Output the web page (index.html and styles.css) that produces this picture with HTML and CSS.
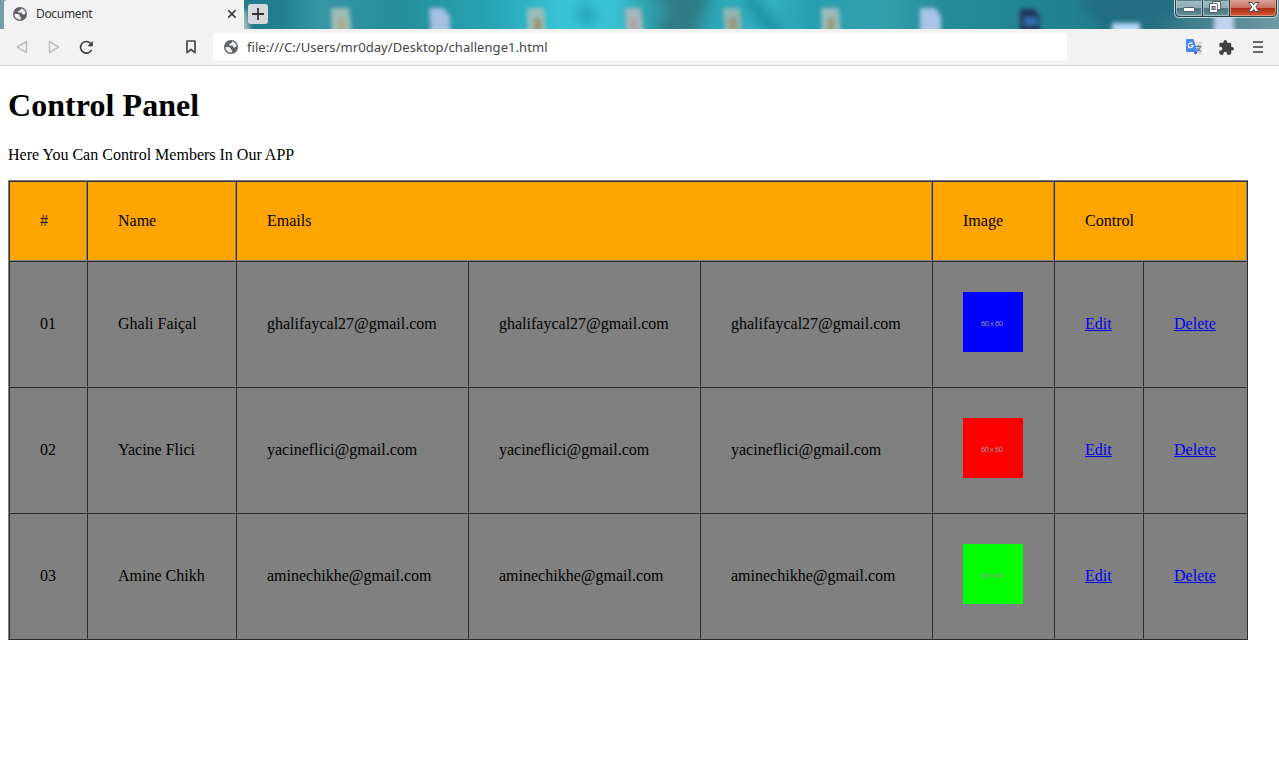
FILE: index.html
```
<!DOCTYPE html>
<html lang="en">
<head>
<meta charset="utf-8">
<title>Document</title>
<link rel="stylesheet" href="styles.css">
</head>
<body>
<svg class="defs" width="0" height="0">
  <symbol id="globe" viewBox="0 0 14 14">
    <circle cx="7" cy="7" r="7" fill="#5f6368"/>
    <path d="M8.2 1.5 7.4 3.3 5.5 3.7 5.1 5.3 6.6 5.7 8.8 5.6 9.2 7.3 11 7.6 12.6 6.3C12.4 4.2 11.4 2.3 8.2 1.5ZM1.5 7 4.7 7 6.6 8.1 6.7 9.5 8.3 10.2 7.7 12.5C4.2 12.9 1.4 10.4 1.5 7Z" fill="#f2f2f2"/>
  </symbol>
</svg>
<header class="browser">
  <div class="tabstrip">
    <svg class="wallpaper" width="1279" height="29" viewBox="0 0 1279 29">
      <defs>
        <linearGradient id="sea">
          <stop offset="0" stop-color="#719fac"/><stop offset=".19" stop-color="#207b8c"/>
          <stop offset=".22" stop-color="#237f8e"/><stop offset=".25" stop-color="#3596a4"/>
          <stop offset=".31" stop-color="#258d9b"/><stop offset=".38" stop-color="#27a2b1"/>
          <stop offset=".44" stop-color="#38c5d7"/><stop offset=".48" stop-color="#38c2d3"/>
          <stop offset=".51" stop-color="#2e9eaa"/><stop offset=".53" stop-color="#358690"/>
          <stop offset=".56" stop-color="#2ba6b7"/><stop offset=".6" stop-color="#36b3c3"/>
          <stop offset=".635" stop-color="#269eaf"/><stop offset=".69" stop-color="#34a0ae"/>
          <stop offset=".74" stop-color="#248b99"/><stop offset=".84" stop-color="#22808f"/>
          <stop offset=".9" stop-color="#267182"/><stop offset="1" stop-color="#7299a5"/>
        </linearGradient>
        <filter id="soft" filterUnits="userSpaceOnUse" x="0" y="-20" width="1279" height="80" color-interpolation-filters="sRGB"><feGaussianBlur stdDeviation="2.3"/></filter>
        <filter id="haze" filterUnits="userSpaceOnUse" x="0" y="-40" width="1279" height="120" color-interpolation-filters="sRGB"><feGaussianBlur stdDeviation="6"/></filter>
      </defs>
      <rect width="1279" height="29" fill="url(#sea)"/>
      <g filter="url(#haze)">
        <path d="M650 -8H712L690 40H652L672 10Z" fill="#2f7c86"/>
        <path d="M740 -5H755L790 35H765Z" fill="#1f94a5"/>
        <path d="M1075 -5H1180V12L1110 38Z" fill="#216f80"/>
        <path d="M575 8 590 5 598 22 582 25Z" fill="#24a5b5"/>
      </g>
      <g filter="url(#soft)">
        <path d="M240 10h6l5 26h-11z" fill="#9dbcb0"/>
        <path d="M331 8h18l3 28h-20z" fill="#9fbdb8"/><path d="M338 18h7v18h-7z" fill="#ada98b"/>
        <path d="M429 8h14l7 8v20h-19z" fill="#a4bfe0"/>
        <path d="M527 8h17l2 28h-18z" fill="#9cbebb"/><path d="M534 18h7v18h-7z" fill="#989270"/>
        <path d="M625 8h16l3 28h-18z" fill="#a4b6bc"/><path d="M631 17h6v19h-6z" fill="#b2a3a5"/>
        <path d="M723 8h17l2 28h-17z" fill="#91b6b0"/><path d="M729 18h8v18h-8z" fill="#9b987c"/>
        <path d="M821 8h18l2 28h-19z" fill="#9bbbb9"/><path d="M828 18h6v18h-6z" fill="#989571"/>
        <path d="M920 8h15l6 8v20h-21z" fill="#a9c4e7"/>
        <path d="M1020 9h14l6 7v20h-20z" fill="#223758"/><path d="M1024 17h14v9h-14z" fill="#326dae"/>
        <path d="M1112 23h28v13h-28z" fill="#b8d7f5"/>
        <path d="M1214 3h20v33h-20z" fill="#bcd2ec"/>
      </g>
    </svg>
    <div class="tab">
      <svg class="globe" width="14" height="14"><use href="#globe"/></svg>
      <span class="tab-title">Document</span>
      <svg class="tab-close" width="10" height="10" viewBox="0 0 10 10"><path d="M1.2 1.2 8.6 8.6M8.6 1.2 1.2 8.6" stroke="#333" stroke-width="1.5"/></svg>
    </div>
    <div class="new-tab"><svg width="12" height="12" viewBox="0 0 12 12"><path d="M6 0V12M0 6H12" stroke="#333" stroke-width="1.8"/></svg></div>
    <svg class="window-buttons" width="105" height="19" viewBox="0 0 105 19">
      <defs>
        <linearGradient id="glass" x2="0" y2="1"><stop offset="0" stop-color="#a1bdc5"/><stop offset=".48" stop-color="#8dabb4"/><stop offset=".52" stop-color="#49747f"/><stop offset="1" stop-color="#66939c"/></linearGradient>
        <linearGradient id="red" x2="0" y2="1"><stop offset="0" stop-color="#dca398"/><stop offset=".48" stop-color="#c6705e"/><stop offset=".52" stop-color="#ad2a13"/><stop offset="1" stop-color="#cf5c36"/></linearGradient>
      </defs>
      <path d="M.5 0V13Q.5 17.500 5 17.500H99Q103.500 17.500 103.500 13V0" fill="none" stroke="#c3dadd" stroke-width="1"/>
      <path d="M1.500 0V12Q1.500 16.500 6 16.500H98Q102.500 16.500 102.500 12V0Z" fill="url(#glass)" stroke="#24414b"/>
      <path d="M56 0H102V12Q102 16 98 16H56Z" fill="url(#red)"/>
      <path d="M2.500 0V12Q2.500 15.500 6 15.500H27.500V0M29.500 0V15.500H54.500V0" fill="none" stroke="#b9cfd4" opacity=".75"/>
      <path d="M56.500 0V15.500H98Q101.500 15.500 101.500 12V0" fill="none" stroke="#e2a58d" opacity=".75"/>
      <path d="M28.500 0V16M55.500 0V16" stroke="#243c45"/>
      <rect x="9.500" y="7.500" width="11" height="4" rx="1" fill="#fff" stroke="#555968"/>
      <path d="M38.500 1.500H46.500V9.500H43.500V12.500H35.500V3.500H38.500Z" fill="#fff" stroke="#555968"/>
      <path d="M38.500 3.500H43.500V9.500" fill="none" stroke="#777b88"/>
      <rect x="38" y="6.500" width="3" height="3" fill="#a8b8bf" stroke="#555968"/>
      <path d="M74.500 2.500H78L79.700 4.700 81.500 2.500H85L81.800 7 85 11.500H81.300L79.700 9.300 78 11.500H74.500L77.700 7Z" fill="#fff" stroke="#56495a"/>
    </svg>
  </div>
  <div class="toolbar">
    <svg class="back" width="12" height="14" viewBox="0 0 12 14"><path d="M10.500 1.500V12.500L1.300 7Z" fill="none" stroke="#bdbdbd" stroke-width="1.500" stroke-linejoin="round"/></svg>
    <svg class="forward" width="12" height="14" viewBox="0 0 12 14"><path d="M1.500 1.500V12.500L10.700 7Z" fill="none" stroke="#bdbdbd" stroke-width="1.500" stroke-linejoin="round"/></svg>
    <svg class="reload" width="15" height="15" viewBox="0 0 15 15"><path d="M12.600 9.800A5.800 5.800 0 1 1 11.500 3.300" fill="none" stroke="#3c3c3c" stroke-width="1.600"/><path d="M13.500 1.500V6H9Z" fill="#3c3c3c" stroke="#3c3c3c" stroke-width=".6" stroke-linejoin="round"/></svg>
    <svg class="bookmark" width="10" height="14" viewBox="0 0 10 14"><path d="M1 1H9V12.700L5 9.500 1 12.700Z" fill="none" stroke="#4a4a4a" stroke-width="1.700" stroke-linejoin="round"/></svg>
    <div class="address">
      <svg class="globe" width="14" height="14"><use href="#globe"/></svg>
      <span class="url">file:///C:/Users/mr0day/Desktop/challenge1.html</span>
    </div>
    <svg class="translate" width="17" height="16" viewBox="0 0 17 16">
      <path d="M7 3H16V15.500H10Z" fill="#dcdcdc"/>
      <path d="M9.500 7.500H15.500M12.500 6V7.500M14.500 7.500Q13.500 11 10.500 12.500M11 9Q12 11 14.800 12.500" fill="none" stroke="#607d8b" stroke-width="1.100"/>
      <path d="M1 0H7.500L11.500 13H1Q0 13 0 12V1Q0 0 1 0Z" fill="#4688f4"/>
      <path d="M8 13H11.500L9.200 15.800Z" fill="#3746b5"/>
      <path d="M6.400 4.700A2.400 2.400 0 1 0 7 6.500H4.800" fill="none" stroke="#fff" stroke-width="1.200"/>
    </svg>
    <svg class="puzzle" width="15" height="15" viewBox="1.500 1 21.500 21.500"><path d="M20.500 11H19V7c0-1.100-.9-2-2-2h-4V3.500a2.500 2.500 0 0 0-5 0V5H4c-1.100 0-1.990.9-1.990 2v3.800H3.500c1.490 0 2.700 1.210 2.700 2.700s-1.210 2.700-2.700 2.700H2V20c0 1.100.9 2 2 2h3.800v-1.500c0-1.490 1.210-2.700 2.700-2.700 1.490 0 2.700 1.210 2.700 2.700V22H17c1.100 0 2-.9 2-2v-4h1.500a2.500 2.500 0 0 0 0-5z" fill="#404040"/></svg>
    <svg class="menu" width="10" height="12" viewBox="0 0 10 12"><path d="M0 1H10M0 6H10M0 11H10" stroke="#666" stroke-width="1.800"/></svg>
  </div>
</header>
<main class="page">
  <h1 class="title">Control Panel</h1>
  <p class="intro">Here You Can Control Members In Our APP</p>
  <table class="members">
    <colgroup><col class="c-num"><col class="c-name"><col class="c-mail"><col class="c-mail"><col class="c-mail"><col class="c-img"><col class="c-edit"><col class="c-del"></colgroup>
    <tr class="head"><td>#</td><td>Name</td><td colspan="3">Emails</td><td>Image</td><td colspan="2">Control</td></tr>
    <tr><td>01</td><td>Ghali Faiçal</td><td>ghalifaycal27@gmail.com</td><td>ghalifaycal27@gmail.com</td><td>ghalifaycal27@gmail.com</td><td><svg class="pic blue" width="60" height="60"><text x="18" y="34" textLength="22">60 x 60</text></svg></td><td><a href="#">Edit</a></td><td><a href="#">Delete</a></td></tr>
    <tr><td>02</td><td>Yacine Flici</td><td>yacineflici@gmail.com</td><td>yacineflici@gmail.com</td><td>yacineflici@gmail.com</td><td><svg class="pic red" width="60" height="60"><text x="18" y="34" textLength="22">60 x 60</text></svg></td><td><a href="#">Edit</a></td><td><a href="#">Delete</a></td></tr>
    <tr><td>03</td><td>Amine Chikh</td><td>aminechikhe@gmail.com</td><td>aminechikhe@gmail.com</td><td>aminechikhe@gmail.com</td><td><svg class="pic lime" width="60" height="60"><text x="18" y="34" textLength="22">60 x 60</text></svg></td><td><a href="#">Edit</a></td><td><a href="#">Delete</a></td></tr>
  </table>
</main>
</body>
</html>
```
FILE: styles.css
```
html { background: #fff; overflow: hidden; }
body { margin: 0; font-family: "Liberation Serif", "Times New Roman", serif; font-size: 16px; color: #000; }
.defs { position: absolute; }
.browser { font-family: "Noto Sans", "Open Sans", sans-serif; }
.browser svg { display: block; flex: none; }
.tabstrip { position: relative; height: 29px; display: flex; align-items: flex-start; padding-left: 4px; overflow: hidden; }
.wallpaper { position: absolute; left: 0; top: 0; }
.tab { position: relative; box-sizing: border-box; width: 240px; height: 29px; background: #f2f2f2; border-radius: 3px 0 0 0; display: flex; align-items: center; padding: 0 7px 1px 9px; }
.tab-title { flex: 1; margin-left: 9px; font-size: 12px; line-height: 16px; letter-spacing: -0.33px; color: #333; }
.new-tab { position: relative; width: 20px; height: 20px; margin: 4px 0 0 4px; border-radius: 3px; background: #d5d9dd; display: flex; align-items: center; justify-content: center; }
.window-buttons { position: relative; margin: 0 0 0 auto; }
.toolbar { box-sizing: border-box; height: 37px; background: #f2f2f2; border-bottom: 1px solid #d2d2d2; display: flex; align-items: center; padding: 0 16px 0 16px; }
.forward { margin-left: 20px; }
.reload { margin-left: 19px; }
.bookmark { margin-left: 92px; }
.address { box-sizing: border-box; width: 854px; height: 28px; margin-left: 17px; background: #fff; border-radius: 3px; display: flex; align-items: center; padding-left: 11px; }
.url { margin-left: 9px; font-size: 13px; line-height: 18px; letter-spacing: 0.06px; color: #444; white-space: nowrap; }
.translate { margin-left: 119px; }
.puzzle { margin-left: 16px; }
.menu { margin-left: auto; }
.page { display: flow-root; margin: 0 8px; }
.title { font-size: 32px; margin: 21.44px 0; font-weight: bold; letter-spacing: 0.06px; }
.intro { margin: 16px 0; }
.members { table-layout: fixed; width: 1240px; border-spacing: 0; border: 1px solid; border-color: #808080 #2c2c2c #2c2c2c #808080; background: #808080; }
.members td { padding: 30px; border: 1px solid; border-color: #2c2c2c #808080 #808080 #2c2c2c; white-space: nowrap; }
.head td { background: #ffa500; }
.c-num { width: 78px; }
.c-name { width: 149px; }
.c-mail { width: 232px; }
.c-img { width: 122px; }
.c-edit { width: 89px; }
.c-del { width: 104px; }
.members a { color: #0000ee; text-decoration: underline; }
.pic text { font: 7.5px "Noto Sans", sans-serif; fill: #969696; }
.blue { background: #0000ff; }
.red { background: #ff0000; }
.lime { background: #00ff00; }
```
